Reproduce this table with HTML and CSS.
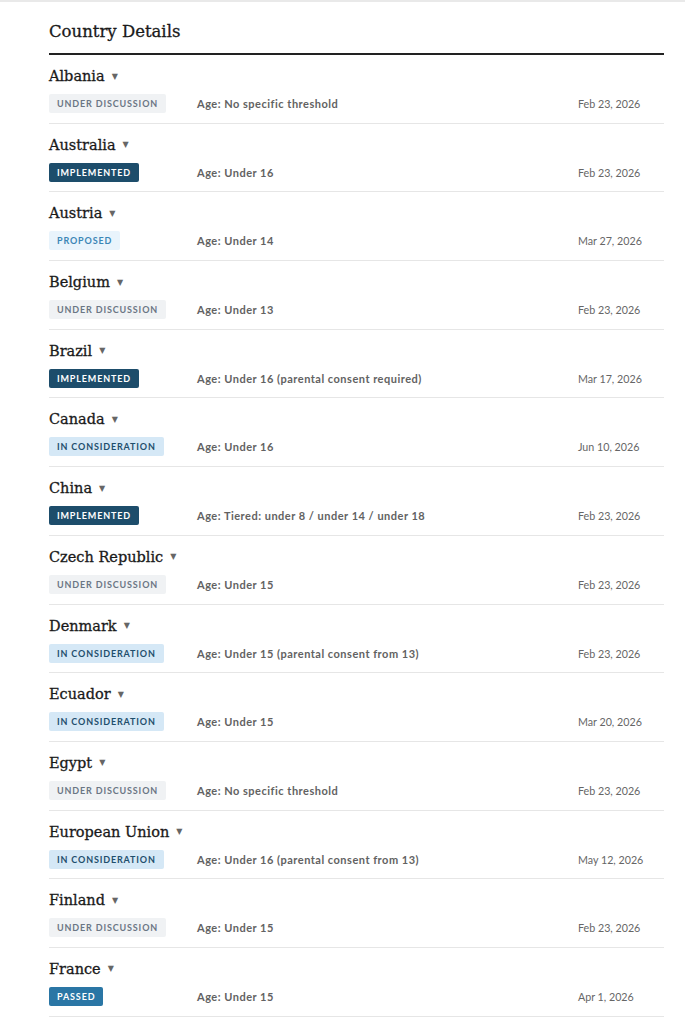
FILE: index.html
```html
<!DOCTYPE html>
<html lang="en">
<head>
<meta charset="utf-8">
<title>Country Details</title>
<link rel="stylesheet" href="styles.css">
</head>
<body>
<div class="page">
  <section class="details">
    <h2 class="title">Country Details</h2>
    <div class="list">
      <div class="row">
        <div class="name">Albania <span class="caret">▼</span></div>
        <div class="meta"><span class="badge discussion">Under Discussion</span><span class="age">Age: No specific threshold</span><span class="date">Feb 23, 2026</span></div>
      </div>
      <div class="row">
        <div class="name">Australia <span class="caret">▼</span></div>
        <div class="meta"><span class="badge implemented">Implemented</span><span class="age">Age: Under 16</span><span class="date">Feb 23, 2026</span></div>
      </div>
      <div class="row">
        <div class="name">Austria <span class="caret">▼</span></div>
        <div class="meta"><span class="badge proposed">Proposed</span><span class="age">Age: Under 14</span><span class="date">Mar 27, 2026</span></div>
      </div>
      <div class="row">
        <div class="name">Belgium <span class="caret">▼</span></div>
        <div class="meta"><span class="badge discussion">Under Discussion</span><span class="age">Age: Under 13</span><span class="date">Feb 23, 2026</span></div>
      </div>
      <div class="row">
        <div class="name">Brazil <span class="caret">▼</span></div>
        <div class="meta"><span class="badge implemented">Implemented</span><span class="age">Age: Under 16 (parental consent required)</span><span class="date">Mar 17, 2026</span></div>
      </div>
      <div class="row">
        <div class="name">Canada <span class="caret">▼</span></div>
        <div class="meta"><span class="badge consideration">In Consideration</span><span class="age">Age: Under 16</span><span class="date">Jun 10, 2026</span></div>
      </div>
      <div class="row">
        <div class="name">China <span class="caret">▼</span></div>
        <div class="meta"><span class="badge implemented">Implemented</span><span class="age">Age: Tiered: under 8 / under 14 / under 18</span><span class="date">Feb 23, 2026</span></div>
      </div>
      <div class="row">
        <div class="name">Czech Republic <span class="caret">▼</span></div>
        <div class="meta"><span class="badge discussion">Under Discussion</span><span class="age">Age: Under 15</span><span class="date">Feb 23, 2026</span></div>
      </div>
      <div class="row">
        <div class="name">Denmark <span class="caret">▼</span></div>
        <div class="meta"><span class="badge consideration">In Consideration</span><span class="age">Age: Under 15 (parental consent from 13)</span><span class="date">Feb 23, 2026</span></div>
      </div>
      <div class="row">
        <div class="name">Ecuador <span class="caret">▼</span></div>
        <div class="meta"><span class="badge consideration">In Consideration</span><span class="age">Age: Under 15</span><span class="date">Mar 20, 2026</span></div>
      </div>
      <div class="row">
        <div class="name">Egypt <span class="caret">▼</span></div>
        <div class="meta"><span class="badge discussion">Under Discussion</span><span class="age">Age: No specific threshold</span><span class="date">Feb 23, 2026</span></div>
      </div>
      <div class="row">
        <div class="name">European Union <span class="caret">▼</span></div>
        <div class="meta"><span class="badge consideration">In Consideration</span><span class="age">Age: Under 16 (parental consent from 13)</span><span class="date">May 12, 2026</span></div>
      </div>
      <div class="row">
        <div class="name">Finland <span class="caret">▼</span></div>
        <div class="meta"><span class="badge discussion">Under Discussion</span><span class="age">Age: Under 15</span><span class="date">Feb 23, 2026</span></div>
      </div>
      <div class="row">
        <div class="name">France <span class="caret">▼</span></div>
        <div class="meta"><span class="badge passed">Passed</span><span class="age">Age: Under 15</span><span class="date">Apr 1, 2026</span></div>
      </div>
    </div>
  </section>
</div>
</body>
</html>
```

FILE: styles.css
```css
html, body {
  margin: 0;
  padding: 0;
  background: #ffffff;
}

.page {
  border-top: 2px solid #e9e9e9;
  padding: 0 21px 0 49px;
  font-family: Lato, "Liberation Sans", sans-serif;
}

.title {
  margin: 0;
  padding: 19px 0 10px;
  font-family: "DejaVu Serif", "Liberation Serif", serif;
  font-size: 16.5px;
  line-height: 22px;
  font-weight: 400;
  color: #1a1a1a;
  -webkit-text-stroke: 0.3px #1a1a1a;
  border-bottom: 2px solid #222222;
}

.row {
  padding: 11px 0 9.7px;
  border-bottom: 1px solid #e6e6e6;
}

.name {
  display: flex;
  align-items: center;
  gap: 7px;
  height: 20px;
  margin-bottom: 8px;
  font-family: "DejaVu Serif", "Liberation Serif", serif;
  font-size: 14.5px;
  line-height: 20px;
  font-weight: 400;
  color: #1a1a1a;
  -webkit-text-stroke: 0.3px #1a1a1a;
}

.caret {
  font-family: "DejaVu Sans", sans-serif;
  font-size: 8px;
  line-height: 8px;
  color: #666666;
  -webkit-text-stroke: 0;
  padding-top: 1px;
}

.meta {
  display: grid;
  grid-template-columns: 148px 1fr 86px;
  align-items: center;
  height: 19px;
}

.badge {
  justify-self: start;
  height: 19px;
  line-height: 19px;
  padding: 0 8px;
  border-radius: 2px;
  font-size: 9px;
  font-weight: 700;
  letter-spacing: 0.85px;
  text-transform: uppercase;
}

.discussion {
  background: #f0f2f4;
  color: #6b7684;
}

.implemented {
  background: #1d4d6b;
  color: #ffffff;
}

.proposed {
  background: #e9f4fc;
  color: #3b86b6;
}

.consideration {
  background: #d5e8f6;
  color: #1f4f6d;
}

.passed {
  background: #2a76a5;
  color: #ffffff;
}

.age {
  font-size: 11px;
  font-weight: 700;
  letter-spacing: 0.5px;
  color: #626262;
}

.date {
  font-size: 10.7px;
  color: #666666;
}
```
